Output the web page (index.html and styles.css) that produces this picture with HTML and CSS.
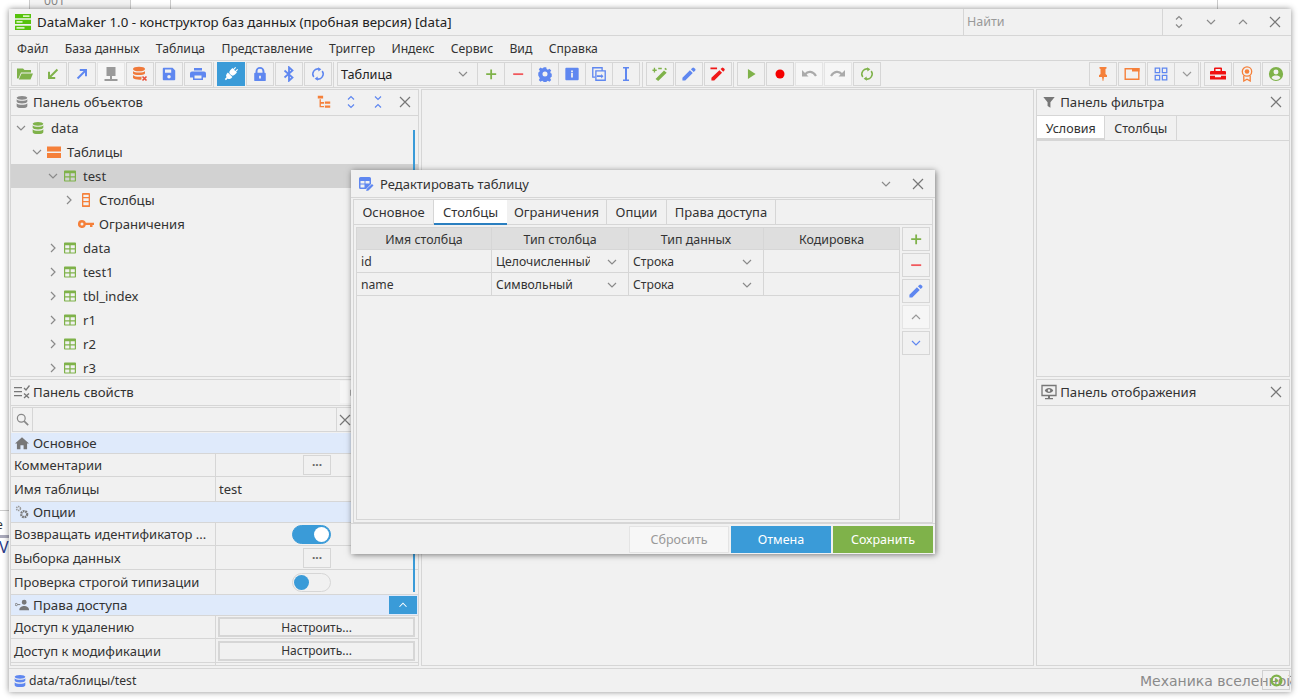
FILE: index.html
```html
<!DOCTYPE html>
<html lang="ru">
<head>
<meta charset="UTF-8">
<title>DataMaker 1.0</title>
<link rel="stylesheet" href="styles.css">
</head>
<body>

<!-- icon sprite -->
<svg class="sprite" xmlns="http://www.w3.org/2000/svg">
  <symbol id="i-folder" viewBox="0 0 16 16"><path fill="#7fb24a" d="M0 2.500h6l1.500 1.500H14V6.500H4L1.500 12.500H0z M4.500 7.500H16l-2.500 6H1.800z"/></symbol>
  <symbol id="i-in" viewBox="-1 -1 18 18"><path fill="none" stroke="#7fb24a" stroke-width="2.200" d="M13 3L4 12M3.500 5.500V12.500H10.500"/></symbol>
  <symbol id="i-out" viewBox="-1 -1 18 18"><path fill="none" stroke="#5f87f0" stroke-width="2.200" d="M3 13L12 4M5.500 3.500H12.500V10.500"/></symbol>
  <symbol id="i-server" viewBox="0 0 16 16"><path fill="#9a9a9a" d="M3.500 1h9v9h-9zM7 10h2v3H7zM1.500 13h13v2h-13z"/></symbol>
  <symbol id="i-dbx" viewBox="0 0 16 16"><ellipse cx="7" cy="3" rx="6" ry="2.300" fill="#f0793a"/><path fill="#f0793a" d="M1 5c1 2 11 2 12 0v2.500c-1 2-11 2-12 0zM1 9c1 2 8 2 8.500 1.500V13.500c-2 .5-7.500 0-8.500-1.500z"/><path fill="none" stroke="#e8503a" stroke-width="1.600" d="M10.500 10.500l4 4M14.500 10.500l-4 4"/></symbol>
  <symbol id="i-save" viewBox="-1 -1 18 18"><path fill="#5f87f0" d="M2 1h10l3 3v10a1 1 0 0 1-1 1H2a1 1 0 0 1-1-1V2a1 1 0 0 1 1-1zM3.500 3v3.500h7V3zM8 9a2 2 0 1 0 0 4 2 2 0 0 0 0-4z"/></symbol>
  <symbol id="i-print" viewBox="0 0 16 16"><path fill="#5f87f0" d="M4 2h8v2.500H4zM2 5.500h12a2 2 0 0 1 2 2V11.500h-3V14H3v-2.500H0V7.500a2 2 0 0 1 2-2zM4.500 9.500V12.500h7V9.500z"/></symbol>
  <symbol id="i-plug" viewBox="-2 -2 20 20"><g fill="#fff" transform="rotate(45 8 8)"><path d="M5.500-2H7v3.500h2V-2h1.500v3.500H12V5a4 4 0 0 1-8 0V1.500h1.500z"/><path d="M4 9.500h8v2a4 4 0 0 1-3 3.400V18H7v-3.100a4 4 0 0 1-3-3.400z"/></g></symbol>
  <symbol id="i-lock" viewBox="-1 -1 18 18"><path fill="#5f87f0" d="M3 6.500V5a5 5 0 0 1 10 0v1.500h.5a1 1 0 0 1 1 1V15a1 1 0 0 1-1 1h-11a1 1 0 0 1-1-1V7.500a1 1 0 0 1 1-1zm2.200 0h5.600V5a2.800 2.800 0 0 0-5.600 0zM7 10v3h2v-3z"/></symbol>
  <symbol id="i-bt" viewBox="0 0 16 16"><path fill="none" stroke="#5f87f0" stroke-width="1.800" d="M3.500 4.500l8 7-3.500 3.200V1.300l3.500 3.200-8 7"/></symbol>
  <symbol id="i-sync" viewBox="-1.500 -1.500 19 19"><path fill="none" stroke="currentColor" stroke-width="1.800" d="M3 11.500A6 6 0 0 1 9.500 2.200M13 4.500A6 6 0 0 1 6.500 13.800"/><path fill="currentColor" d="M8 0l4 2.500L8.500 5zM8 16l-4-2.500L7.500 11z"/></symbol>
  <symbol id="i-plus" viewBox="-2.800 -2.800 21.600 21.600"><path fill="#7fb24a" d="M7 2h2.400v5H15v2.400H9.400V15H7V9.400H1.500V7H7z"/></symbol>
  <symbol id="i-minus" viewBox="-2.800 -2.800 21.600 21.600"><path fill="#f0585c" d="M1.500 7H15v2.400H1.500z"/></symbol>
  <symbol id="i-gear" viewBox="-1.500 -1.500 19 19"><path fill="#5f87f0" fill-rule="evenodd" d="M6.500 0h3l.4 2.200 1.500.7 1.900-1.200 2.100 2.100-1.200 1.900.6 1.500 1.200.4v3.800l-1.200.4-.6 1.500 1.200 1.900-2.100 2.100-1.900-1.200-1.500.7-.4 2.200h-3l-.4-2.200-1.500-.7-1.900 1.200-2.100-2.100 1.200-1.900-.6-1.500L0 9.900V6.100l1.200-.4.600-1.500L.6 2.300 2.700.2l1.900 1.200 1.500-.7zM8 5a3 3 0 1 0 0 6 3 3 0 0 0 0-6z"/></symbol>
  <symbol id="i-info" viewBox="-1 -1 18 18"><path fill="#5f87f0" d="M1.500 1h13a1 1 0 0 1 1 1v12a1 1 0 0 1-1 1h-13a1 1 0 0 1-1-1V2a1 1 0 0 1 1-1zM7 4v2h2V4zm0 3v5h2V7z"/></symbol>
  <symbol id="i-copy" viewBox="-1 -1 18 18"><path fill="none" stroke="#5f87f0" stroke-width="1.500" d="M3.500 11.500h-2.500V1h10.500v3M4.500 4.500h10.500V15H4.500z"/><path fill="#5f87f0" d="M5.500 9.500h5V8l2.500 2.500-2.500 2.500v-1.500h-5z"/></symbol>
  <symbol id="i-cursor" viewBox="0 0 16 16"><path fill="#5f87f0" d="M5 1h6v1.600H9V13.400h2V15H5v-1.600h2V2.600H5z"/></symbol>
  <symbol id="i-wand" viewBox="-1 -1 18 18"><path fill="#7fb24a" d="M12.500 4l3 2.500L6 16l-3-2.500zM2.500 1v1.800h1.800v1.700H2.500v1.800H1V4.500H-.5V2.800H1V1z"/><path fill="#7fb24a" d="M6 1h4v1.600H6zM14 1l1.800 1.500-1 1.300-2-1.500z"/></symbol>
  <symbol id="i-pencil" viewBox="-.5 -.5 17 17"><path fill="currentColor" d="M11.500 1.500a1.400 1.400 0 0 1 2 0l1 1a1.400 1.400 0 0 1 0 2L13 6 10 3zM9 4l3 3-8 8H1v-3z"/></symbol>
  <symbol id="i-redpen" viewBox="-.5 -.5 17 17"><path fill="#f01818" d="M12 1.500a1.300 1.300 0 0 1 1.800 0l1 1a1.300 1.300 0 0 1 0 1.800L13.500 5.500l-2.800-2.800zM9.500 4l2.800 2.800L4 15H1v-3zM0 1h7v2H0z"/></symbol>
  <symbol id="i-play" viewBox="-2.500 -2.500 21 21"><path fill="#7fb24a" d="M4 1.500L14 8 4 14.500z"/></symbol>
  <symbol id="i-rec" viewBox="-3.500 -3.500 23 23"><circle cx="8" cy="8" r="6.500" fill="#f50000"/></symbol>
  <symbol id="i-undo" viewBox="0 0 16 16"><path fill="none" stroke="#aaa" stroke-width="2.200" d="M4 8.500C7 4.500 12 5 15 10"/><path fill="#aaa" d="M1 10.500V4l6.500 6.500z"/></symbol>
  <symbol id="i-redo" viewBox="0 0 16 16"><path fill="none" stroke="#aaa" stroke-width="2.200" d="M12 8.500C9 4.500 4 5 1 10"/><path fill="#aaa" d="M15 10.500V4L8.500 10.500z"/></symbol>
  <symbol id="i-pin" viewBox="0 0 16 16"><path fill="#f5803a" d="M4.500 1h7v1.500l-1 .6V8l1.500 1.200V11H9l-.7 4h-.6L7 11H4V9.200L5.500 8V3.100l-1-.6z"/></symbol>
  <symbol id="i-win" viewBox="0 0 16 16"><path fill="none" stroke="#f5803a" stroke-width="1.400" d="M1.200 2.700h13.600v10.600H1.200z"/><path fill="#f5803a" d="M8 2h7.500v3.500H8z"/></symbol>
  <symbol id="i-grid" viewBox="-1 -1 18 18"><path fill="none" stroke="#5f87f0" stroke-width="1.400" d="M1.500 1.500h5v5h-5zM9.500 1.500h5v5h-5zM1.500 9.500h5v5h-5zM9.500 9.500h5v5h-5z"/></symbol>
  <symbol id="i-box" viewBox="0 0 16 16"><path fill="#f01010" d="M5 1.500h6a1 1 0 0 1 1 1V5h3a1 1 0 0 1 1 1v2.500H0V6a1 1 0 0 1 1-1h3V2.500a1 1 0 0 1 1-1zM5.500 3v2h5V3zM0 9.700h5v1.500h6V9.700h5V13.500H0z"/></symbol>
  <symbol id="i-award" viewBox="0 0 16 16"><circle cx="8" cy="5.500" r="4.700" fill="none" stroke="#f5803a" stroke-width="1.300"/><circle cx="8" cy="5.500" r="2.300" fill="#f5803a"/><path fill="none" stroke="#f5803a" stroke-width="1.300" d="M4.800 9.500V15L8 13.200 11.200 15V9.500"/></symbol>
  <symbol id="i-user" viewBox="-1 -1 18 18"><path fill="#7fb24a" d="M8 0a8 8 0 1 1 0 16A8 8 0 0 1 8 0zm0 3a2.800 2.800 0 1 0 0 5.600A2.800 2.800 0 0 0 8 3zM3 12.500a6.500 6.500 0 0 0 10 0C12.500 10.500 10 9.800 8 9.800S3.500 10.500 3 12.500z"/></symbol>
  <symbol id="i-db" viewBox="-2.500 -2.500 21 21"><path fill="currentColor" d="M8 0c3.800 0 7 1 7 2.500S11.800 5 8 5 1 4 1 2.500 4.200 0 8 0zM1 4.500C2 6 5 6.500 8 6.500s6-.5 7-2v3c0 1.500-3.200 2.500-7 2.500s-7-1-7-2.500zM1 9.500c1 1.500 4 2 7 2s6-.5 7-2v4C15 15 11.800 16 8 16s-7-1-7-2.500z"/></symbol>
  <symbol id="i-tree" viewBox="-1 -1 18 18"><path fill="#f5803a" d="M1 1h6v3H1zM3 5h1.500v3H8v2H3zM3 10h1.500v2.500H8V14H3zM9 7.500h6V10H9zM9 12h6v2.500H9z"/></symbol>
  <symbol id="i-expand" viewBox="0 0 16 16"><path fill="none" stroke="#5f87f0" stroke-width="1.200" d="M5 5.500l3-3 3 3M5 10.500l3 3 3-3"/></symbol>
  <symbol id="i-collapse" viewBox="0 0 16 16"><path fill="none" stroke="#5f87f0" stroke-width="1.200" d="M5 2.500l3 3 3-3M5 13.500l3-3 3 3"/></symbol>
  <symbol id="i-updown" viewBox="0 0 16 16"><path fill="none" stroke="#8a8a8a" stroke-width="1.200" d="M5 5.500l3-3 3 3M5 10.500l3 3 3-3"/></symbol>
  <symbol id="i-x" viewBox="0 0 16 16"><path fill="none" stroke="#777" stroke-width="1.200" d="M3 3l10 10M13 3L3 13"/></symbol>
  <symbol id="i-down" viewBox="0 0 16 16"><path fill="none" stroke="currentColor" stroke-width="1.200" d="M4 6l4 4 4-4"/></symbol>
  <symbol id="i-up" viewBox="0 0 16 16"><path fill="none" stroke="currentColor" stroke-width="1.200" d="M4 10l4-4 4 4"/></symbol>
  <symbol id="i-right" viewBox="0 0 16 16"><path fill="none" stroke="currentColor" stroke-width="1.200" d="M6 4l4 4-4 4"/></symbol>
  <symbol id="i-table" viewBox="-2 -2 20 20"><path fill="#7fb24a" d="M1.500 1h13a1 1 0 0 1 1 1v12a1 1 0 0 1-1 1h-13a1 1 0 0 1-1-1V2a1 1 0 0 1 1-1zM2 4.500v3.800h5.200V4.500zm6.800 0v3.800H14V4.500zM2 9.800V13.500h5.200V9.800zm6.800 0V13.500H14V9.800z"/></symbol>
  <symbol id="i-tables" viewBox="0 0 16 16"><path fill="#f5803a" d="M1 2.500h14v5H1zM1 9h14v5H1z"/></symbol>
  <symbol id="i-cols" viewBox="-1 -1 18 18"><path fill="#f5803a" d="M4.500 0h7a1 1 0 0 1 1 1v14a1 1 0 0 1-1 1h-7a1 1 0 0 1-1-1V1a1 1 0 0 1 1-1zM5 2v2.500h6V2zm0 4v3h6V6zm0 4.500V14h6v-3.500z"/></symbol>
  <symbol id="i-key" viewBox="0 0 16 16"><path fill="#f5803a" d="M4 4a4 4 0 0 1 3.800 2.800H16V9h-1.500v2H12V9H7.800A4 4 0 1 1 4 4zm0 2.500a1.500 1.500 0 1 0 0 3 1.500 1.500 0 0 0 0-3z"/></symbol>
  <symbol id="i-logo" viewBox="0 0 16 16"><path fill="#56c20c" d="M0 0h16v4.200H0zM0 5.700h16v4.400H0zM0 11.700h16V16H0z"/><path fill="#d8f4c0" d="M1.500 7h6v1.800h-6zM1.500 13h8v1.700h-8zM8 1.300h6.500v1.700H8z"/></symbol>
  <symbol id="i-funnel" viewBox="-3.200 -3.200 22.400 22.400"><path fill="#777" d="M0 1h16L10 8.500V16l-4-2.500V8.500z"/></symbol>
  <symbol id="i-eye" viewBox="0 0 16 16"><path fill="none" stroke="#777" stroke-width="1.300" d="M1 1.500h14v10H1z"/><path fill="#777" d="M7 11.500h2v2.500H7zM4 14h8v1.300H4zM8 4c2 0 3.500 1.200 4.200 2.500C11.500 7.800 10 9 8 9S4.500 7.800 3.800 6.500C4.500 5.200 6 4 8 4zm0 1.300a1.200 1.200 0 1 0 0 2.400 1.200 1.200 0 0 0 0-2.400z"/></symbol>
  <symbol id="i-props" viewBox="0 0 16 16"><path fill="#777" d="M0 3h8v1.300H0zM0 7h8v1.300H0zM0 11h8v1.300H0z"/><path fill="none" stroke="#777" stroke-width="1.300" d="M10 4l2 2 3.500-4.500M10 9.500l5 4.500M15 9.500L10 14"/></symbol>
  <symbol id="i-search" viewBox="0 0 16 16"><circle cx="6.500" cy="6.500" r="4.800" fill="none" stroke="#888" stroke-width="1.500"/><path fill="none" stroke="#888" stroke-width="2" d="M10 10l5 5"/></symbol>
  <symbol id="i-home" viewBox="0 0 16 16"><path fill="#777" d="M8 1.500L16 8.500h-2.200V15H9.800v-4.500H6.200V15H2.200V8.500H0z"/></symbol>
  <symbol id="i-gears" viewBox="0 0 16 16"><circle cx="4" cy="4" r="2.200" fill="none" stroke="#999" stroke-width="1.800" stroke-dasharray="1.500 .7"/><circle cx="10.500" cy="10.500" r="3.400" fill="none" stroke="#777" stroke-width="2.600" stroke-dasharray="2 .8"/></symbol>
  <symbol id="i-access" viewBox="0 0 16 16"><path fill="#777" d="M10.500 2a2.800 2.800 0 1 1 0 5.600 2.800 2.800 0 0 1 0-5.600zM5 13c0-2.500 3-4 5.500-4S16 10.500 16 13v1H5z"/><circle cx="1.500" cy="7.500" r="1.300" fill="none" stroke="#777"/><path stroke="#777" d="M3 7.500h3"/></symbol>
  <symbol id="i-edit" viewBox="0 0 16 16"><path fill="#5f87f0" fill-rule="evenodd" d="M1 2.500A1.500 1.500 0 0 1 2.500 1h9A1.500 1.500 0 0 1 13 2.500V8l-5 5H2.500A1.500 1.500 0 0 1 1 11.500zM2.500 5v2.500h4V5zm5 0v2.500h4V5zM2.500 8.500v3h4v-3z"/><path fill="#5f87f0" d="M14 8l1.500 1.400-5 5.100-2.300.6.600-2.300z"/></symbol>
  <symbol id="i-status" viewBox="0 0 16 16"><circle cx="8" cy="8" r="6" fill="none" stroke="#7fb24a" stroke-width="3"/><circle cx="8" cy="8" r="2" fill="#7fb24a"/></symbol>
  <symbol id="i-dock" viewBox="0 0 16 16"><path fill="none" stroke="#999" stroke-width="2" d="M13 3L5 11M4 5v7h7"/></symbol>
</svg>

<!-- bits of the window behind -->
<div class="backdrop backdrop-top"><span>001</span></div>
<div class="backdrop backdrop-rule"></div>
<div class="backdrop backdrop-left"><span class="back-e">e</span><span class="back-v">V|</span></div>

<div class="window">

  <div class="titlebar">
    <svg class="ic logo"><use href="#i-logo"/></svg>
    <div class="title-text">DataMaker 1.0 - конструктор баз данных (пробная версия) [data]</div>
    <div class="find">Найти</div>
    <div class="title-btns">
      <svg class="ic"><use href="#i-updown"/></svg>
      <svg class="ic grey"><use href="#i-down"/></svg>
      <svg class="ic grey"><use href="#i-up"/></svg>
      <svg class="ic"><use href="#i-x"/></svg>
    </div>
  </div>

  <div class="menubar">
    <span>Файл</span><span>База данных</span><span>Таблица</span><span>Представление</span><span>Триггер</span><span>Индекс</span><span>Сервис</span><span>Вид</span><span>Справка</span>
  </div>

  <div class="toolbar">
    <div class="tool-group">
      <button class="tool first"><svg class="ic"><use href="#i-folder"/></svg></button>
      <button class="tool"><svg class="ic"><use href="#i-in"/></svg></button>
      <button class="tool"><svg class="ic"><use href="#i-out"/></svg></button>
      <button class="tool off"><svg class="ic"><use href="#i-server"/></svg></button>
      <button class="tool"><svg class="ic"><use href="#i-dbx"/></svg></button>
      <button class="tool"><svg class="ic"><use href="#i-save"/></svg></button>
      <button class="tool"><svg class="ic"><use href="#i-print"/></svg></button>
    </div>
    <div class="tool-group">
      <button class="tool active"><svg class="ic"><use href="#i-plug"/></svg></button>
      <button class="tool"><svg class="ic"><use href="#i-lock"/></svg></button>
      <button class="tool"><svg class="ic"><use href="#i-bt"/></svg></button>
      <button class="tool blue"><svg class="ic"><use href="#i-sync"/></svg></button>
    </div>
    <div class="tool-strip">
      <div class="combo">Таблица<svg class="ic grey"><use href="#i-down"/></svg></div>
      <button class="tool"><svg class="ic"><use href="#i-plus"/></svg></button>
      <button class="tool"><svg class="ic"><use href="#i-minus"/></svg></button>
      <button class="tool"><svg class="ic"><use href="#i-gear"/></svg></button>
      <button class="tool"><svg class="ic"><use href="#i-info"/></svg></button>
      <button class="tool"><svg class="ic"><use href="#i-copy"/></svg></button>
      <button class="tool"><svg class="ic"><use href="#i-cursor"/></svg></button>
    </div>
    <div class="tool-group">
      <button class="tool"><svg class="ic"><use href="#i-wand"/></svg></button>
      <button class="tool blue"><svg class="ic"><use href="#i-pencil"/></svg></button>
      <button class="tool"><svg class="ic"><use href="#i-redpen"/></svg></button>
    </div>
    <div class="tool-group no-sep">
      <button class="tool"><svg class="ic"><use href="#i-play"/></svg></button>
      <button class="tool"><svg class="ic"><use href="#i-rec"/></svg></button>
      <button class="tool off"><svg class="ic"><use href="#i-undo"/></svg></button>
      <button class="tool off"><svg class="ic"><use href="#i-redo"/></svg></button>
      <button class="tool green"><svg class="ic"><use href="#i-sync"/></svg></button>
    </div>
    <div class="tool-right">
      <div class="tool-group">
        <button class="tool"><svg class="ic"><use href="#i-pin"/></svg></button>
        <button class="tool"><svg class="ic"><use href="#i-win"/></svg></button>
        <div class="split">
          <button class="tool"><svg class="ic"><use href="#i-grid"/></svg></button>
          <button class="tool narrow grey"><svg class="ic"><use href="#i-down"/></svg></button>
        </div>
      </div>
      <div class="tool-group no-sep">
        <button class="tool"><svg class="ic"><use href="#i-box"/></svg></button>
        <button class="tool"><svg class="ic"><use href="#i-award"/></svg></button>
        <button class="tool"><svg class="ic"><use href="#i-user"/></svg></button>
      </div>
    </div>
  </div>

  <div class="workspace">
    <div class="col col-left">
      <section class="panel">
        <header class="panel-head">
          <svg class="ic grey"><use href="#i-db"/></svg>
          <span class="panel-title">Панель объектов</span>
          <div class="head-btns">
            <svg class="ic"><use href="#i-tree"/></svg>
            <svg class="ic"><use href="#i-expand"/></svg>
            <svg class="ic"><use href="#i-collapse"/></svg>
            <svg class="ic"><use href="#i-x"/></svg>
          </div>
        </header>
        <ul class="tree">
          <li class="lv0"><svg class="chev"><use href="#i-down"/></svg><svg class="ic green"><use href="#i-db"/></svg>data</li>
          <li class="lv1"><svg class="chev"><use href="#i-down"/></svg><svg class="ic"><use href="#i-tables"/></svg>Таблицы</li>
          <li class="lv2 selected"><svg class="chev"><use href="#i-down"/></svg><svg class="ic"><use href="#i-table"/></svg>test</li>
          <li class="lv3"><svg class="chev"><use href="#i-right"/></svg><svg class="ic"><use href="#i-cols"/></svg>Столбцы</li>
          <li class="lv3"><span class="chev"></span><svg class="ic"><use href="#i-key"/></svg>Ограничения</li>
          <li class="lv2"><svg class="chev"><use href="#i-right"/></svg><svg class="ic"><use href="#i-table"/></svg>data</li>
          <li class="lv2"><svg class="chev"><use href="#i-right"/></svg><svg class="ic"><use href="#i-table"/></svg>test1</li>
          <li class="lv2"><svg class="chev"><use href="#i-right"/></svg><svg class="ic"><use href="#i-table"/></svg>tbl_index</li>
          <li class="lv2"><svg class="chev"><use href="#i-right"/></svg><svg class="ic"><use href="#i-table"/></svg>r1</li>
          <li class="lv2"><svg class="chev"><use href="#i-right"/></svg><svg class="ic"><use href="#i-table"/></svg>r2</li>
          <li class="lv2"><svg class="chev"><use href="#i-right"/></svg><svg class="ic"><use href="#i-table"/></svg>r3</li>
        </ul>
        <div class="thumb thumb-tree"></div>
      </section>

      <section class="panel panel-low">
        <header class="panel-head">
          <svg class="ic"><use href="#i-props"/></svg>
          <span class="panel-title">Панель свойств</span>
          <div class="dock-btn"><svg class="ic"><use href="#i-dock"/></svg></div>
        </header>
        <div class="prop-search">
          <div class="search-ic"><svg class="ic"><use href="#i-search"/></svg></div>
          <div class="search-field"></div>
          <div class="search-x"><svg class="ic"><use href="#i-x"/></svg></div>
        </div>
        <div class="props">
          <div class="prop-section"><svg class="ic"><use href="#i-home"/></svg>Основное</div>
          <div class="prop-row"><div class="prop-name">Комментарии</div><div class="prop-val center"><button class="dots">···</button></div></div>
          <div class="prop-row"><div class="prop-name">Имя таблицы</div><div class="prop-val">test</div></div>
          <div class="prop-section"><svg class="ic"><use href="#i-gears"/></svg>Опции</div>
          <div class="prop-row"><div class="prop-name">Возвращать идентификатор ...</div><div class="prop-val center"><span class="toggle on"></span></div></div>
          <div class="prop-row"><div class="prop-name">Выборка данных</div><div class="prop-val center"><button class="dots">···</button></div></div>
          <div class="prop-row"><div class="prop-name">Проверка строгой типизации</div><div class="prop-val center"><span class="toggle"></span></div></div>
          <div class="prop-section"><svg class="ic"><use href="#i-access"/></svg>Права доступа<button class="fold"><svg class="ic"><use href="#i-up"/></svg></button></div>
          <div class="prop-row"><div class="prop-name">Доступ к удалению</div><div class="prop-val wide"><button class="setup">Настроить...</button></div></div>
          <div class="prop-row"><div class="prop-name">Доступ к модификации</div><div class="prop-val wide"><button class="setup">Настроить...</button></div></div>
          <div class="prop-row"><div class="prop-name"></div><div class="prop-val wide"><button class="setup"></button></div></div>
        </div>
        <div class="thumb thumb-props"></div>
      </section>
    </div>

    <div class="col col-mid"><section class="panel"></section></div>

    <div class="col col-right">
      <section class="panel">
        <header class="panel-head">
          <svg class="ic"><use href="#i-funnel"/></svg>
          <span class="panel-title">Панель фильтра</span>
          <div class="head-btns"><svg class="ic"><use href="#i-x"/></svg></div>
        </header>
        <div class="filter-tabs">
          <div class="filter-tab current">Условия</div>
          <div class="filter-tab">Столбцы</div>
        </div>
      </section>
      <section class="panel panel-low">
        <header class="panel-head">
          <svg class="ic"><use href="#i-eye"/></svg>
          <span class="panel-title">Панель отображения</span>
          <div class="head-btns"><svg class="ic"><use href="#i-x"/></svg></div>
        </header>
      </section>
    </div>
  </div>

  <footer class="statusbar">
    <svg class="ic blue"><use href="#i-db"/></svg>data/таблицы/test
  </footer>
</div>

<div class="watermark">Механика вселенной</div>
<div class="status-box"><svg class="ic"><use href="#i-status"/></svg></div>

<!-- edit table dialog -->
<div class="dialog">
  <div class="dialog-head">
    <svg class="ic"><use href="#i-edit"/></svg>
    <span class="dialog-title">Редактировать таблицу</span>
    <svg class="ic grey"><use href="#i-down"/></svg>
    <svg class="ic"><use href="#i-x"/></svg>
  </div>
  <div class="dialog-body">
    <div class="tabs">
      <div class="tab tab-a">Основное</div>
      <div class="tab tab-b current">Столбцы</div>
      <div class="tab tab-c">Ограничения</div>
      <div class="tab tab-d">Опции</div>
      <div class="tab tab-e">Права доступа</div>
    </div>
    <div class="tab-page">
      <div class="cols-table">
        <div class="cols-row cols-head">
          <div>Имя столбца</div><div>Тип столбца</div><div>Тип данных</div><div>Кодировка</div>
        </div>
        <div class="cols-row">
          <div class="cell">id</div>
          <div class="cell pick"><span class="pick-text">Целочисленный</span><svg class="ic grey"><use href="#i-down"/></svg></div>
          <div class="cell pick"><span class="pick-text">Строка</span><svg class="ic grey"><use href="#i-down"/></svg></div>
          <div class="cell"></div>
        </div>
        <div class="cols-row">
          <div class="cell">name</div>
          <div class="cell pick"><span class="pick-text">Символьный</span><svg class="ic grey"><use href="#i-down"/></svg></div>
          <div class="cell pick"><span class="pick-text">Строка</span><svg class="ic grey"><use href="#i-down"/></svg></div>
          <div class="cell"></div>
        </div>
      </div>
      <div class="side-btns">
        <button class="tool"><svg class="ic"><use href="#i-plus"/></svg></button>
        <button class="tool"><svg class="ic"><use href="#i-minus"/></svg></button>
        <button class="tool blue"><svg class="ic"><use href="#i-pencil"/></svg></button>
        <button class="tool off grey"><svg class="ic"><use href="#i-up"/></svg></button>
        <button class="tool blue"><svg class="ic"><use href="#i-down"/></svg></button>
      </div>
    </div>
  </div>
  <div class="dialog-foot">
    <button class="foot-btn reset">Сбросить</button>
    <button class="foot-btn cancel">Отмена</button>
    <button class="foot-btn save">Сохранить</button>
  </div>
</div>

</body>
</html>
```

FILE: styles.css
```css
/* Reset and base */
* {
    box-sizing: border-box;
}
body {
    margin: 0;
    width: 1300px;
    height: 700px;
    overflow: hidden;
    position: relative;
    background: #fff;
    font-family: "Noto Sans", "Open Sans", sans-serif;
    font-size: 12.2px;
    color: #333;
}
button {
    font: inherit;
    color: inherit;
    padding: 0;
    background: none;
}
.sprite {
    position: absolute;
    width: 0;
    height: 0;
}
.ic {
    width: 16px;
    height: 16px;
    flex: none;
}
.grey { color: #8a8a8a; }
.green { color: #7fb24a; }
.blue { color: #5f87f0; }

/* Window behind */
.backdrop {
    position: absolute;
}
.backdrop-top {
    left: 29px;
    top: 0;
    width: 102px;
    height: 9px;
    background: #f3f3f3;
    border-left: 1px solid #ccc;
    border-right: 1px solid #ccc;
    overflow: hidden;
}
.backdrop-top span {
    position: absolute;
    left: 14px;
    top: -8px;
    color: #888;
}
.backdrop-rule {
    left: 170px;
    top: 0;
    width: 1px;
    height: 9px;
    background: #ccc;
    box-shadow: 1047px 0 0 #ccc;
}
.backdrop-left {
    left: 0;
    top: 510px;
    width: 9px;
    height: 50px;
    border-top: 1px solid #ccc;
    overflow: hidden;
}
.back-e {
    position: absolute;
    left: -4px;
    top: 5px;
}
.back-v {
    position: absolute;
    left: -1px;
    top: 24px;
    color: #2a3a8a;
    font-size: 16px;
    border-top: 3px solid #aab;
    line-height: 18px;
}

/* Main window */
.window {
    position: absolute;
    left: 9px;
    top: 9px;
    width: 1282px;
    height: 683px;
    display: flex;
    flex-direction: column;
    background: #f1f1f1;
    box-shadow: 0 0 6px rgba(0,0,0,0.45);
}
.titlebar {
    height: 27px;
    flex: none;
    display: flex;
    align-items: center;
    border-bottom: 1px solid #d6d6d6;
    padding-left: 6px;
}
.logo {
    margin-right: 6px;
}
.title-text {
    width: 926px;
    font-size: 13.3px;
    color: #222;
}
.find {
    width: 200px;
    height: 26px;
    line-height: 25px;
    padding-left: 3px;
    border-left: 1px solid #d6d6d6;
    border-right: 1px solid #d6d6d6;
    font-size: 12.5px;
    color: #999;
}
.title-btns {
    display: flex;
    gap: 16px;
    padding-left: 8px;
}
.menubar {
    height: 25px;
    flex: none;
    display: flex;
    align-items: center;
    gap: 16.3px;
    padding-left: 8px;
    border-bottom: 1px solid #d6d6d6;
}

/* Toolbar */
.toolbar {
    height: 27px;
    flex: none;
    display: flex;
    padding: 1px 1px 0 2px;
    border-bottom: 1px solid #d6d6d6;
}
.tool-group, .tool-strip {
    display: flex;
    gap: 1px;
    padding-right: 1px;
    margin-right: 3px;
    border-right: 1px solid #d6d6d6;
    height: 25px;
}
.tool-group.no-sep {
    border-right: none;
    padding-right: 0;
    margin-right: 0;
}
.tool-strip {
    gap: 0;
    padding-right: 2px;
}
.tool {
    width: 28px;
    height: 24px;
    border: 1px solid #d6d6d6;
    display: flex;
    align-items: center;
    justify-content: center;
    background: #f1f1f1;
}
.tool.first {
    width: 27px;
}
.tool-strip .tool {
    width: 27px;
    border-left: none;
}
.tool.off {
    background: #f6f6f6;
    border-color: #e4e4e4;
}
.tool.active {
    background: #3a9bd8;
    border-color: #3a9bd8;
}
.tool.narrow {
    width: 24px;
    border-left: none;
}
.tool.green { color: #7fb24a; }
.tool.blue { color: #5f87f0; }
.tool.grey { color: #999; }
.split {
    display: flex;
}
.combo {
    width: 141px;
    height: 24px;
    border: 1px solid #d6d6d6;
    display: flex;
    align-items: center;
    justify-content: space-between;
    padding: 0 6px 0 3px;
    font-size: 12.7px;
    color: #222;
}
.tool-right {
    display: flex;
    margin-left: auto;
}

/* Panels */
.workspace {
    flex: 1;
    min-height: 0;
    display: flex;
    gap: 2px;
    padding: 1px;
}
.col {
    display: flex;
    flex-direction: column;
    gap: 2px;
}
.col-left { width: 409px; }
.col-mid { width: 614px; }
.col-right { width: 254px; }
.panel {
    position: relative;
    height: 288px;
    border: 1px solid #d6d6d6;
    overflow: hidden;
}
.panel-low {
    height: 287px;
}
.col-mid .panel {
    height: 577px;
}
.panel-head {
    height: 26px;
    display: flex;
    align-items: center;
    gap: 3px;
    padding: 0 0 2px 3px;
    border-bottom: 1px solid #d6d6d6;
}
.col-right .panel-head {
    padding-left: 4px;
}
.panel-title {
    font-size: 13.2px;
    color: #333;
}
.head-btns {
    margin-left: auto;
    display: flex;
    gap: 11px;
    padding-right: 5px;
}
.dock-btn {
    margin-left: auto;
    margin-right: 50px;
    width: 28px;
    height: 22px;
    background: #f6f6f6;
    display: flex;
    align-items: center;
    justify-content: center;
}
.dock-btn .ic {
    width: 12px;
    height: 12px;
}
.tree {
    list-style: none;
    margin: 0;
    padding: 0;
    font-size: 13.1px;
}
.tree li {
    height: 24px;
    display: flex;
    align-items: center;
}
.tree .ic {
    margin: 0 5px 0 1px;
}
.chev {
    width: 16px;
    height: 16px;
    flex: none;
    color: #8a8a8a;
}
.lv0 { padding-left: 2px; }
.lv1 { padding-left: 18px; }
.lv2 { padding-left: 34px; }
.lv3 { padding-left: 50px; }
.tree li.selected {
    background: #d2d2d2;
}
.thumb {
    position: absolute;
    right: 3px;
    width: 2px;
    background: #3a9bd8;
}
.thumb-tree {
    top: 40px;
    bottom: 0;
}
.thumb-props {
    top: 27px;
    height: 185px;
}

/* Properties */
.prop-search {
    height: 25px;
    margin: 1px 1px 0;
    display: flex;
    border: 1px solid #d6d6d6;
}
.search-ic {
    width: 20px;
    border-right: 1px solid #d6d6d6;
    display: flex;
    align-items: center;
    justify-content: center;
}
.search-ic .ic {
    width: 13px;
    height: 13px;
}
.search-field {
    flex: 1;
}
.search-x {
    width: 80px;
    display: flex;
    align-items: center;
    border-left: 1px solid #d6d6d6;
}
.props {
    margin-top: 1px;
    display: grid;
    grid-template-rows: 21px 23px 25px 21px 23px 24px 25px 21px 23px 24px 24px;
    font-size: 13px;
}
.prop-section {
    position: relative;
    display: flex;
    align-items: center;
    gap: 4px;
    padding-left: 4px;
    background: #dfeafb;
    border-bottom: 1px solid #d6d6d6;
    font-size: 13.3px;
}
.prop-section .ic {
    width: 14px;
    height: 14px;
}
.prop-row {
    display: flex;
    border-bottom: 1px solid #d6d6d6;
}
.prop-name {
    width: 205px;
    flex: none;
    display: flex;
    align-items: center;
    padding-left: 3px;
    border-right: 1px solid #d6d6d6;
    white-space: nowrap;
    overflow: hidden;
}
.prop-val {
    flex: 1;
    display: flex;
    align-items: center;
    padding-left: 3px;
}
.prop-val.center {
    padding-left: 76px;
}
.prop-val.wide {
    padding: 0 2px;
}
.dots {
    margin-left: 11px;
    width: 28px;
    height: 20px;
    border: 1px solid #d6d6d6;
    font-size: 12px;
    line-height: 16px;
    font-weight: bold;
    color: #666;
}
.toggle {
    position: relative;
    width: 39px;
    height: 19px;
    border: 1px solid #d6d6d6;
    border-radius: 10px;
}
.toggle::after {
    content: "";
    position: absolute;
    left: 1px;
    top: 1px;
    width: 15px;
    height: 15px;
    border-radius: 50%;
    background: #3a9bd8;
}
.toggle.on {
    background: #3a9bd8;
    border-color: #3a9bd8;
}
.toggle.on::after {
    left: 21px;
    background: #fff;
}
.setup {
    display: block;
    width: 197px;
    height: 20px;
    border: 2px solid #d6d6d6;
    font-size: 12px;
    line-height: 15px;
}
.fold {
    position: absolute;
    right: 1px;
    top: 1px;
    width: 28px;
    height: 18px;
    border: none;
    background: #3a9bd8;
    color: #fff;
    display: flex;
    align-items: center;
    justify-content: center;
}
.filter-tabs {
    display: flex;
    height: 25px;
    border-bottom: 1px solid #d6d6d6;
    font-size: 12.5px;
}
.filter-tab {
    width: 72px;
    padding-top: 4px;
    text-align: center;
    border-right: 1px solid #d6d6d6;
}
.filter-tab.current {
    width: 68px;
    background: #fff;
    border-bottom: 2px solid #d6d6d6;
}

/* Status bar */
.statusbar {
    height: 24px;
    flex: none;
    display: flex;
    align-items: center;
    gap: 1px;
    padding-left: 3px;
    border-top: 1px solid #d6d6d6;
}
.watermark {
    position: absolute;
    left: 1140px;
    top: 673px;
    width: 151px;
    overflow: hidden;
    white-space: nowrap;
    font-family: "DejaVu Sans", sans-serif;
    font-size: 14px;
    color: #8a8a8a;
}
.status-box {
    position: absolute;
    left: 1262px;
    top: 670px;
    width: 28px;
    height: 20px;
    border: 1px solid #d0d0d0;
    display: flex;
    justify-content: center;
    align-items: center;
}
.status-box .ic {
    width: 13px;
    height: 13px;
}

/* Dialog */
.dialog {
    position: absolute;
    left: 351px;
    top: 170px;
    width: 584px;
    height: 384px;
    display: flex;
    flex-direction: column;
    background: #f1f1f1;
    box-shadow: 1px 1px 6px rgba(0,0,0,0.5);
}
.dialog-head {
    height: 28px;
    flex: none;
    display: flex;
    align-items: center;
    gap: 16px;
    padding: 0 9px 0 7px;
    border-bottom: 1px solid #d6d6d6;
}
.dialog-head .ic:first-child {
    margin-right: -10px;
}
.dialog-title {
    flex: 1;
    font-size: 13px;
}
.dialog-body {
    margin: 1px 2px 0;
    height: 324px;
    border: 1px solid #d6d6d6;
}
.tabs {
    display: flex;
    height: 25px;
    border-bottom: 1px solid #d6d6d6;
    font-size: 13px;
}
.tab {
    padding-top: 3px;
    text-align: center;
    border-right: 1px solid #d6d6d6;
    background: #f1f1f1;
}
.tab-a { width: 80px; }
.tab-b { width: 73px; }
.tab-c { width: 100px; }
.tab-d { width: 60px; }
.tab-e { width: 109px; }
.tab.current {
    background: #fff;
    border-bottom: 2px solid #2a7fc0;
    border-right: none;
    height: 25px;
}
.tab-page {
    display: flex;
    padding: 2px 2px 0 2px;
}
.cols-table {
    width: 544px;
    height: 293px;
    border: 1px solid #d6d6d6;
}
.cols-row {
    display: grid;
    grid-template-columns: 135px 137px 135px 1fr;
    height: 23px;
    border-bottom: 1px solid #d6d6d6;
}
.cols-row > div {
    border-right: 1px solid #d6d6d6;
    padding: 1px 4px 0;
    line-height: 21px;
}
.cols-row > div:last-child {
    border-right: none;
}
.cols-head {
    height: 22px;
    background: #dedede;
    font-size: 12.4px;
}
.cols-head > div {
    text-align: center;
}
.cols-row > .pick {
    display: flex;
    align-items: center;
    justify-content: space-between;
    padding-top: 1px;
    white-space: nowrap;
}
.pick-text {
    max-width: 94px;
    overflow: hidden;
}
.pick .ic {
    margin-right: 4px;
}
.side-btns {
    margin-left: 2px;
    display: flex;
    flex-direction: column;
    gap: 2px;
}
.dialog-foot {
    flex: 1;
    display: flex;
    justify-content: flex-end;
    gap: 2px;
    padding: 2px 2px 1px;
    border-top: 1px solid #d6d6d6;
}
.foot-btn {
    width: 100px;
    border: none;
    font-size: 12.5px;
}
.reset {
    background: #f7f7f7;
    border: 1px solid #e4e4e4;
    color: #999;
}
.cancel {
    background: #3a9bd8;
    color: #fff;
}
.save {
    background: #7fb24a;
    color: #fff;
}
```
